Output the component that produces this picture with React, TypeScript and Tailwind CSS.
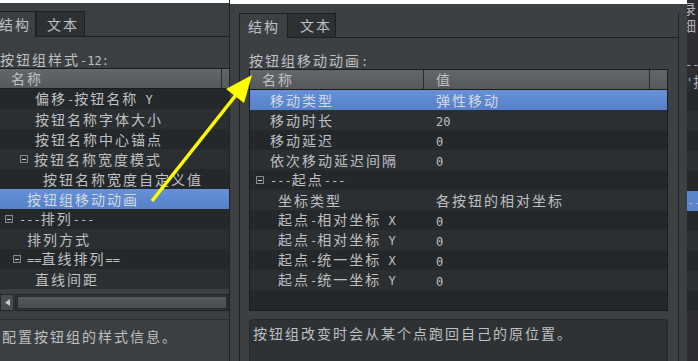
import React from 'react'

const cjk = "font-['Noto_Sans_CJK_SC',sans-serif] text-[14px] tracking-[2px]"
const mono = "font-['DejaVu_Sans_Mono',monospace] text-[12px] tracking-normal whitespace-pre"

// CJK runs get wide tracking, latin runs stay mono and tight
function Txt({ s }: { s: string }) {
  const parts = s.split(/([\x00-\x7f]+)/).filter(Boolean)
  return (
    <>
      {parts.map((p, i) =>
        /^[\x00-\x7f]+$/.test(p) ? (
          <span key={i} className={mono}>
            {p}
          </span>
        ) : (
          <span key={i}>{p}</span>
        ),
      )}
    </>
  )
}

function MinusBox() {
  return (
    <span className="inline-flex h-[8px] w-[8px] shrink-0 items-center justify-center border border-[#85888b] bg-[#2a2c2e]">
      <span className="h-px w-[4px] bg-[#c8cacc]" />
    </span>
  )
}

type Row = { name: string; value?: string; pl: number; group?: boolean; selected?: boolean }

const leftRows: Row[] = [
  { name: '偏移-按钮名称 Y', pl: 35 },
  { name: '按钮名称字体大小', pl: 35 },
  { name: '按钮名称中心锚点', pl: 35 },
  { name: '按钮名称宽度模式', pl: 20, group: true },
  { name: '按钮名称宽度自定义值', pl: 43 },
  { name: '按钮组移动动画', pl: 27, selected: true },
  { name: '---排列---', pl: 5, group: true },
  { name: '排列方式', pl: 27 },
  { name: '==直线排列==', pl: 13, group: true },
  { name: '直线间距', pl: 35 },
]

const frontRows: Row[] = [
  { name: '移动类型', value: '弹性移动', pl: 20, selected: true },
  { name: '移动时长', value: '20', pl: 20 },
  { name: '移动延迟', value: '0', pl: 20 },
  { name: '依次移动延迟间隔', value: '0', pl: 20 },
  { name: '---起点---', pl: 6, group: true },
  { name: '坐标类型', value: '各按钮的相对坐标', pl: 28 },
  { name: '起点-相对坐标 X', value: '0', pl: 28 },
  { name: '起点-相对坐标 Y', value: '0', pl: 28 },
  { name: '起点-统一坐标 X', value: '0', pl: 28 },
  { name: '起点-统一坐标 Y', value: '0', pl: 28 },
  { name: '', pl: 0 },
]

function rowBg(row: Row, i: number) {
  if (row.selected) return 'bg-gradient-to-b from-[#6690d8] to-[#5680c8] text-[#d3d9e3]'
  return i % 2 === 1 ? 'bg-[#2c2f32]' : 'bg-[#25282a]'
}

function NameCell({ row, width }: { row: Row; width: string }) {
  return (
    <div
      className={`flex h-full shrink-0 items-center gap-[6px] whitespace-nowrap ${width}`}
      style={{ paddingLeft: row.pl }}
    >
      {row.group && <MinusBox />}
      <span>
        <Txt s={row.name} />
      </span>
    </div>
  )
}

function Tab({ label, active, className = '' }: { label: string; active?: boolean; className?: string }) {
  return (
    <div
      className={`flex items-center border border-[#1e2022] ${
        active ? 'border-b-0 bg-[#3d4043]' : 'bg-[#2e3134]'
      } ${className}`}
    >
      <Txt s={label} />
    </div>
  )
}

function LeftWindow() {
  return (
    <div className="flex w-[230px] shrink-0 flex-col overflow-hidden border-r border-[#232426] bg-[#3c3f41]">
      <div className="h-[3px] bg-white" />
      {/* tabs */}
      <div className="mt-[8px] flex h-[26px]">
        <Tab label="结构" active className="w-[37px] -ml-[1px] border-l-0 pl-0" />
        <Tab label="文本" className="w-[49px] pl-[10px]" />
        <div className="flex-1 border-b border-[#1e2022]" />
      </div>
      {/* panel */}
      <div className="flex flex-1 flex-col pt-[14px]">
        <div className="mb-[1px] h-[16px] leading-[16px] whitespace-nowrap">
          <Txt s="按钮组样式-12:" />
        </div>
        <div className="w-[262px] border-t border-[#1b1c1e]">
          <div className="flex h-[20px] border-b border-[#1b1c1e] bg-gradient-to-b from-[#64676a] to-[#56595c] leading-[19px]">
            <div className="w-[222px] shrink-0 border-r border-[#2a2b2d] pl-[11px]">
              <Txt s="名称" />
            </div>
            <div className="flex-1" />
          </div>
          {leftRows.map((r, i) => (
            <div key={i} className={`flex h-[20px] leading-[20px] ${rowBg(r, i)}`}>
              <NameCell row={r} width="w-[222px]" />
            </div>
          ))}
        </div>
        {/* horizontal scrollbar */}
        <div className="mt-[5px] flex h-[17px] gap-[1px]">
          <div className="flex w-[14px] items-center justify-center border border-[#26272a] bg-[#4a4d50]">
            <svg width="5" height="7" viewBox="0 0 5 7">
              <path d="M5 0 L0 3.5 L5 7 Z" fill="#c8cacc" />
            </svg>
          </div>
          <div className="flex-1 border border-[#232427] bg-[#2f3235] p-[1px]">
            <div className="h-full rounded-[2px] border border-[#2a2c2e] bg-gradient-to-b from-[#56595c] to-[#4a4d50]" />
          </div>
        </div>
        <div className="mt-[8px] flex-1 border-t border-[#2b2d2f] pt-[8px] pl-[2px] leading-[16px] whitespace-nowrap">
          <Txt s="配置按钮组的样式信息。" />
        </div>
      </div>
    </div>
  )
}

function FrontWindow() {
  return (
    <div className="flex w-[457px] shrink-0 flex-col bg-[#3d4043]">
      <div className="h-[4px] bg-white" />
      <div className="mt-[9px] ml-[9px] mr-[8px] flex h-[25px]">
        <Tab label="结构" active className="w-[49px] pl-[8px]" />
        <Tab label="文本" className="w-[49px] pl-[12px] -ml-px" />
        <div className="flex-1 border-b border-r border-[#1e2022]" />
      </div>
      <div className="ml-[9px] mr-[8px] flex flex-1 flex-col border-x border-[#1e2022] pl-[9px] pr-[10px] pt-[14px]">
        <div className="mb-[1px] h-[16px] leading-[16px] whitespace-nowrap">
          <Txt s="按钮组移动动画:" />
        </div>
        <div className="border border-[#1b1c1e] bg-[#25282a]">
          <div className="flex h-[20px] border-b border-[#1b1c1e] bg-gradient-to-b from-[#64676a] to-[#56595c] leading-[19px]">
            <div className="w-[174px] shrink-0 border-r border-[#2a2b2d] pl-[12px]">
              <Txt s="名称" />
            </div>
            <div className="w-[226px] shrink-0 border-r border-[#2a2b2d] pl-[12px]">
              <Txt s="值" />
            </div>
            <div className="flex-1" />
          </div>
          {frontRows.map((r, i) => (
            <div key={i} className={`flex h-[20px] leading-[20px] ${rowBg(r, i)}`}>
              <NameCell row={r} width="w-[174px]" />
              <div className="whitespace-nowrap pl-[12px]">{r.value && <Txt s={r.value} />}</div>
            </div>
          ))}
        </div>
        <div className="mt-[8px] flex-1 rounded-t-[4px] border border-b-0 border-[#27282a] bg-[#2f3235] px-[3px] pt-[5px] leading-[16px] whitespace-nowrap">
          <Txt s="按钮组改变时会从某个点跑回自己的原位置。" />
        </div>
      </div>
    </div>
  )
}

function RightSliver() {
  const stripes = ['', '', '', '', '', '--', '', '', '', '', '']
  return (
    <div className="flex flex-1 flex-col overflow-hidden bg-[#2b2d30] text-[#aeb2b6]">
      <div className="-ml-[5px] h-[16px] leading-[16px]">录</div>
      <div className="-ml-[5px] h-[18px] leading-[18px]">细</div>
      <div className="h-[22px]" />
      <div className="-ml-[2px] h-[15px] leading-[15px]">
        <Txt s="--" />
      </div>
      <div className="-ml-[1px] h-[20px] leading-[20px] whitespace-nowrap">
        <Txt s="'按" />
      </div>
      {stripes.map((s, i) => (
        <div
          key={i}
          className={`h-[20px] leading-[20px] whitespace-nowrap ${
            i === 5 ? 'bg-[#5a84cc]' : i % 2 ? 'bg-[#2c2f32]' : 'bg-[#25282a]'
          }`}
        >
          {s && <Txt s={s} />}
        </div>
      ))}
    </div>
  )
}

function Arrow() {
  return (
    <svg className="pointer-events-none absolute inset-0" width="698" height="361" viewBox="0 0 698 361">
      <line x1="152" y1="201" x2="236" y2="95" stroke="#ffff00" strokeWidth="3.5" />
      <polygon points="252,75 244,103 226,89" fill="#ffff00" />
    </svg>
  )
}

export default function App() {
  return (
    <div className={`relative flex h-[361px] w-[698px] overflow-hidden bg-[#3c3f41] text-[#bec0c3] ${cjk}`}>
      <LeftWindow />
      <FrontWindow />
      <RightSliver />
      <Arrow />
    </div>
  )
}
